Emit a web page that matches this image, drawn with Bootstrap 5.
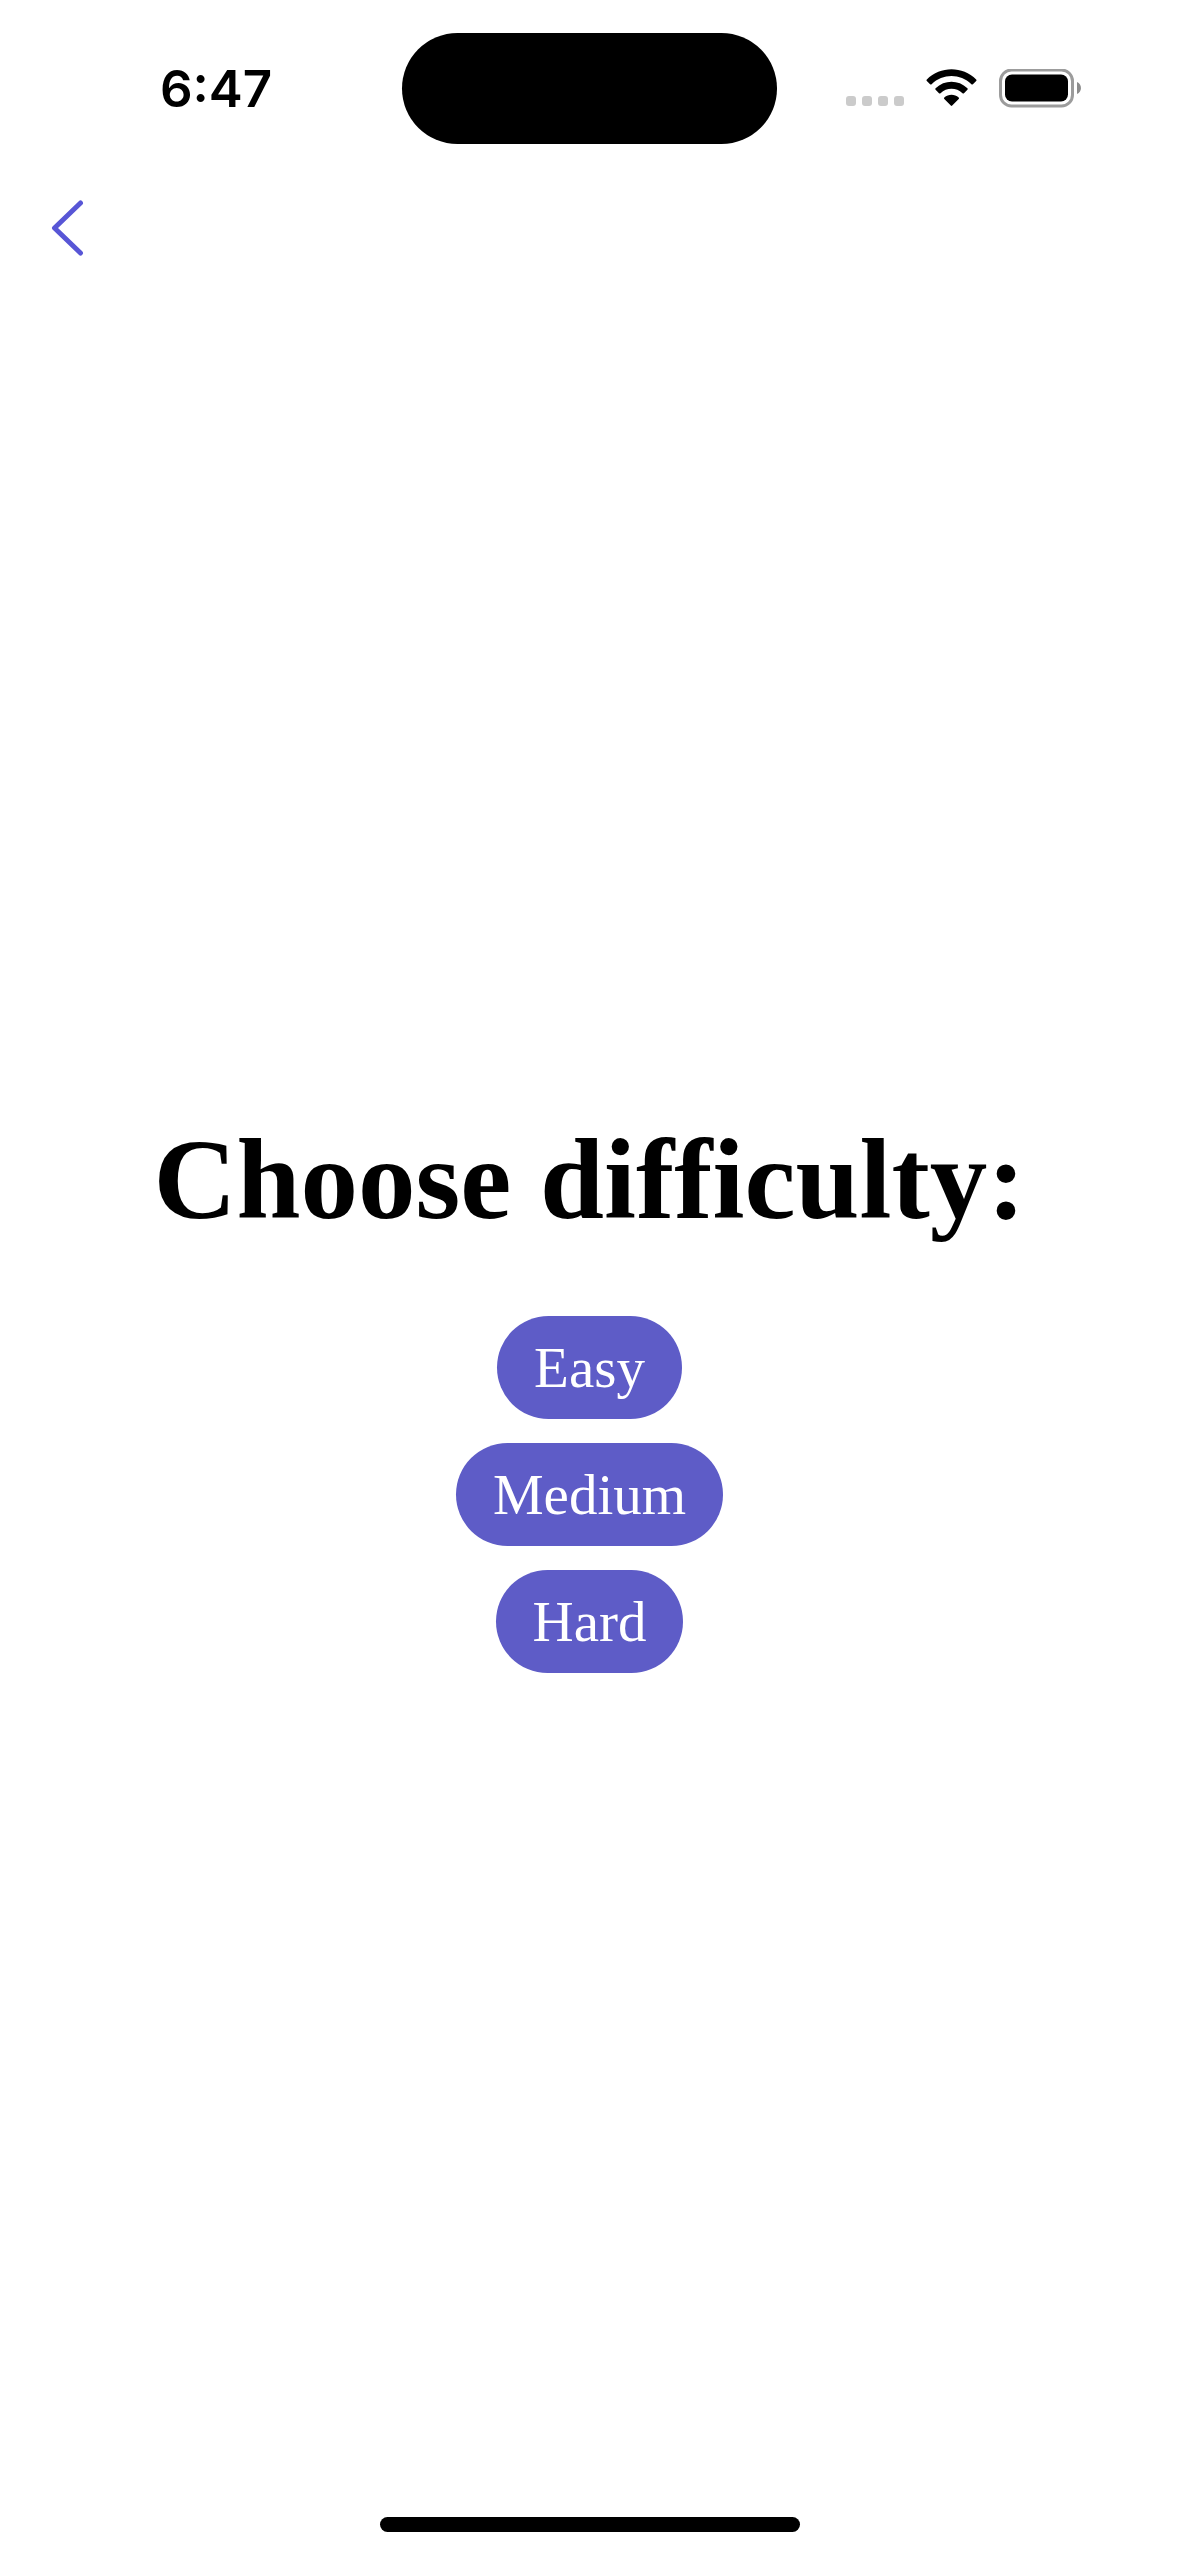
<!DOCTYPE html>
<html lang="en">
<head>
<meta charset="utf-8">
<meta name="viewport" content="width=device-width, initial-scale=1">
<title>Choose difficulty</title>
<link href="https://cdn.jsdelivr.net/npm/bootstrap@5.3.0/dist/css/bootstrap.min.css" rel="stylesheet">
<style>
  body { background: #fff; color: #000; font-family: "Liberation Serif", serif; }
  .status-bar { height: 177px; font-family: Inter, sans-serif; }
  .status-time { font-size: 51px; font-weight: 600; line-height: 60px; padding-left: 30px; }
  .island { width: 375px; height: 111px; }
  .status-icons { padding-right: 98px; gap: 22px; }
  .top-nav { height: 132px; padding: 23px 48px; }
  .back-button { line-height: 0; }
  .title-text { font-size: 115px; line-height: 122px; font-weight: 700; font-variant-ligatures: none; margin-bottom: 75px; }
  .choices { gap: 24px; }
  .choice-button {
    --bs-btn-color: #fff; --bs-btn-bg: #5e5cc7;
    --bs-btn-hover-color: #fff; --bs-btn-hover-bg: #504eb3;
    --bs-btn-active-color: #fff; --bs-btn-active-bg: #4543a0;
    --bs-btn-padding-x: 37px; --bs-btn-padding-y: 18px;
    --bs-btn-font-size: 57px; --bs-btn-line-height: 67px;
    --bs-btn-border-width: 0;
  }
  .home-area { padding: 34px 0 24px; }
  .home-bar { width: 420px; height: 15px; }
</style>
</head>
<body class="min-vh-100 d-flex flex-column">
  <header>
    <div class="status-bar d-flex align-items-center">
      <div class="col">
        <div class="status-time text-center">6:47</div>
      </div>
      <div class="island bg-black rounded-pill"></div>
      <div class="col">
        <div class="status-icons d-flex justify-content-end align-items-center">
          <svg width="58" height="40" viewBox="0 0 58 40" fill="#cbcbcb" aria-hidden="true">
            <rect y="27" width="10" height="10" rx="3"/><rect x="16" y="27" width="10" height="10" rx="3"/><rect x="32" y="27" width="10" height="10" rx="3"/><rect x="48" y="27" width="10" height="10" rx="3"/>
          </svg>
          <svg width="51" height="40" viewBox="0 0 51 40" aria-label="Wi-Fi" role="img">
            <path d="M.8 10.400C14.400-3.200 36.600-3.200 50.200 10.400q.7.800 0 1.500l-3.300 3.300q-.8.700-1.500 0C34.200 4.300 16.800 4.300 5.600 15.200q-.7.700-1.500 0L.8 11.900q-.7-.7 0-1.500z"/>
            <path d="M9.600 19.300c8.900-8.600 22.900-8.600 31.800 0q.8.800 0 1.500L38 24.200q-.7.700-1.500 0c-6.200-5.800-15.800-5.800-22 0q-.8.700-1.500 0l-3.400-3.400q-.8-.7 0-1.500z"/>
            <path d="M18.300 28.500c4.100-3.700 10.300-3.700 14.400 0q.8.800 0 1.600l-6.500 6.500q-.7.700-1.400 0l-6.500-6.500q-.8-.8 0-1.600z"/>
          </svg>
          <svg width="82" height="40" viewBox="0 0 82 40" aria-label="Battery full" role="img">
            <rect x="1.500" y="1" width="72" height="36" rx="11" fill="none" stroke="#9c9c9c" stroke-width="3"/>
            <rect x="6" y="5.500" width="63" height="27" rx="7"/>
            <path d="M78 13c5.300 2.200 5.300 9.800 0 12z" fill="#8c8c8c"/>
          </svg>
        </div>
      </div>
    </div>
    <nav class="top-nav d-flex align-items-start" aria-label="Page">
      <button type="button" class="back-button btn p-0 border-0" aria-label="Back">
        <svg width="36" height="56" viewBox="0 0 36 56" fill="none" stroke="#5856d6" stroke-width="5" stroke-linecap="round" stroke-linejoin="round"><path d="M32.500 3 6.500 28l26 25"/></svg>
      </button>
    </nav>
  </header>
  <main class="flex-fill d-flex flex-column align-items-center justify-content-center">
    <h1 class="title-text text-center">Choose difficulty:</h1>
    <div class="choices d-flex flex-column align-items-center">
      <button type="button" class="choice-button btn rounded-pill">Easy</button>
      <button type="button" class="choice-button btn rounded-pill">Medium</button>
      <button type="button" class="choice-button btn rounded-pill">Hard</button>
    </div>
  </main>
  <footer class="home-area d-flex justify-content-center">
    <div class="home-bar bg-black rounded-pill"></div>
  </footer>
  <script src="https://cdn.jsdelivr.net/npm/bootstrap@5.3.0/dist/js/bootstrap.bundle.min.js"></script>
</body>
</html>
